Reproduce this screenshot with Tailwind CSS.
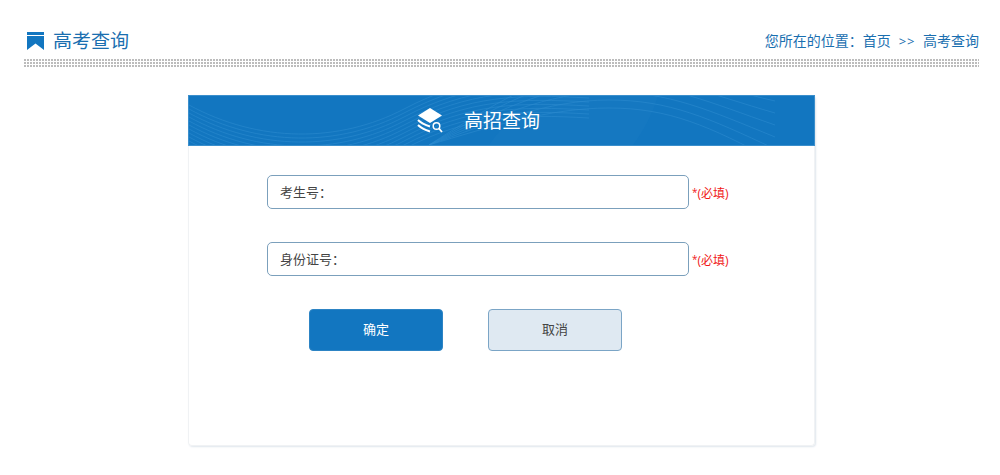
<!DOCTYPE html>
<html lang="zh-CN">
<head>
  <meta charset="UTF-8" />
  <meta name="viewport" content="width=device-width, initial-scale=1.0"/>
  <title>高考查询</title>
  <script src="https://cdn.jsdelivr.net/npm/@tailwindcss/browser@4"></script>
</head>
<body class="bg-white min-h-screen pl-6 pr-[21px] pt-[25px] font-['Open_Sans','Noto_Sans_CJK_SC',sans-serif] text-[13px] text-[#444]">
  <header>
    <div class="flex items-center justify-between h-8 text-[#1a6fb0]">
      <h1 class="flex items-center gap-2 pl-[2px] text-[19px]">
        <svg class="w-[19px] h-[19px]" viewBox="0 0 19 19" fill="#1276c0" aria-hidden="true">
          <path d="M1 0h17v3H1zM1 4h17v14l-8.500-6.500L1 18z"/>
        </svg>
        高考查询
      </h1>
      <nav class="flex items-center text-sm">
        <span>您所在的位置：</span>
        <a href="#" class="hover:underline">首页</a>
        <span class="px-2 text-[13px] tracking-wider">&gt;&gt;</span>
        <a href="#" class="hover:underline">高考查询</a>
      </nav>
    </div>
    <!-- dotted rule -->
    <svg class="block w-full h-2 mt-[2px]" aria-hidden="true">
      <defs>
        <pattern id="dots" width="3" height="3" patternUnits="userSpaceOnUse">
          <rect width="2" height="2" fill="#bcbcbc"/>
        </pattern>
      </defs>
      <rect width="100%" height="8" fill="url(#dots)"/>
    </svg>
  </header>

  <main class="mx-auto mt-[28px] max-w-[627px] min-h-[351px] rounded-sm border border-t-0 border-[#f0f2f4] shadow-[1px_1px_2px_#dfe6ec]">
    <div class="relative -mx-px h-[51px] overflow-hidden border border-[#3b8fcc] bg-[#1276c0]">
      <svg class="absolute inset-y-0 left-0 w-[586px] h-[49px]" viewBox="0 0 586 49" fill="none" stroke="#2c8bce" stroke-opacity=".6" aria-hidden="true">
        <path fill="#2483c8" fill-opacity=".2" stroke="none" d="M300 49C320 20 350 0 390 0H469Q460 28 444 49z"/>
        <g id="waves"></g>
      </svg>
      <div class="relative flex h-full items-center justify-center gap-[21px] pr-[22px] mr-[24px] text-white">
        <svg class="w-[26px] h-[26px]" viewBox="0 0 26 26" fill="none" stroke="#fff" stroke-width="2" aria-hidden="true">
          <path fill="#fff" stroke="none" d="M13 0l12 7.500L13 15 1 7.500z"/>
          <path d="M1 12q4 4 12 6.500M1 17q4 4 12 6.500"/>
          <circle cx="19.500" cy="18" r="3.300" stroke-width="1.500"/>
          <path stroke-width="1.800" d="M22 20.500l3 3.500"/>
        </svg>
        <h2 class="pt-[2px] text-[19px]">高招查询</h2>
      </div>
    </div>

    <form id="query-form" class="px-[78px] pt-[29px]">
      <div class="flex items-center gap-[3px] mb-[33px]">
        <div class="flex items-center w-[422px] h-[34px] rounded-[5px] border border-[#7ba0bc] px-3">
          <label for="ksh" class="shrink-0 pt-px">考生号：</label>
          <input type="text" id="ksh" name="ksh" required class="min-w-0 flex-1 outline-none"/>
        </div>
        <span class="shrink-0 whitespace-nowrap pt-[3px] text-xs text-[#f01818]"><span class="align-top text-[10px]">*</span>(必填)</span>
      </div>
      <div class="flex items-center gap-[3px] mb-[33px]">
        <div class="flex items-center w-[422px] h-[34px] rounded-[5px] border border-[#7ba0bc] px-3">
          <label for="sfzh" class="shrink-0 pt-px">身份证号：</label>
          <input type="text" id="sfzh" name="sfzh" required class="min-w-0 flex-1 outline-none"/>
        </div>
        <span class="shrink-0 whitespace-nowrap pt-[3px] text-xs text-[#f01818]"><span class="align-top text-[10px]">*</span>(必填)</span>
      </div>
      <div class="flex gap-[45px] pl-[42px]">
        <button type="submit" class="w-[134px] h-[42px] rounded-[4px] border border-[#2d84c4] bg-[#1276c0] text-white">确定</button>
        <button type="reset" class="w-[134px] h-[42px] rounded-[4px] border border-[#7ba5c6] bg-[#dfe9f2]">取消</button>
      </div>
    </form>
  </main>

  <script>
    // curved lines behind the banner title
    const waves = document.getElementById('waves');

    function addWave(d) {
      const path = document.createElementNS('http://www.w3.org/2000/svg', 'path');
      path.setAttribute('d', d);
      waves.appendChild(path);
    }

    for (let i = 0; i < 11; i++) {
      const y = i * 4;
      addWave(`M0 ${9 + y}C70 ${47 + y} 150 ${47 + y} 215 ${13 + y}S330 ${-22 + y} 400 ${-18 + y}`);
    }
    for (let i = 0; i < 6; i++) {
      const y = 12 - i * 8;
      addWave(`M240 49C300 ${25 + y / 2} 360 ${y} 420 ${y}S520 ${y + 18} 586 ${65 - i * 12}`);
    }
  </script>
</body>
</html>
